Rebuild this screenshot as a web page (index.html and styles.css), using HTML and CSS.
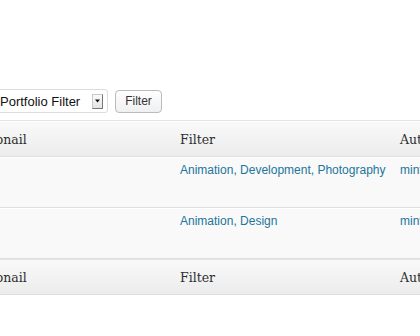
FILE: index.html
```html
<!DOCTYPE html>
<html>
<head>
<meta charset="utf-8">
<link rel="stylesheet" href="styles.css">
</head>
<body>
<div class="page">
  <div class="actions">
    <div class="select">
      <span class="select-text">Portfolio Filter</span>
      <span class="select-arrow"><svg width="5" height="4" viewBox="0 0 5 4"><path d="M0 0.5h5L2.5 3.5z" fill="#111"/></svg></span>
    </div>
    <button class="btn">Filter</button>
  </div>
  <div class="table">
    <div class="row head">
      <div class="cell c1">Thumbnail</div>
      <div class="cell c2">Filter</div>
      <div class="cell c3">Author</div>
    </div>
    <div class="row body">
      <div class="cell c1"></div>
      <div class="cell c2"><a>Animation</a>, <a>Development</a>, <a>Photography</a></div>
      <div class="cell c3"><a>mintthemes</a></div>
    </div>
    <div class="row body">
      <div class="cell c1"></div>
      <div class="cell c2"><a>Animation</a>, <a>Design</a></div>
      <div class="cell c3"><a>mintthemes</a></div>
    </div>
    <div class="row head foot">
      <div class="cell c1">Thumbnail</div>
      <div class="cell c2">Filter</div>
      <div class="cell c3">Author</div>
    </div>
  </div>
</div>
</body>
</html>
```
FILE: styles.css
```css
html, body {
  margin: 0;
  padding: 0;
  background: #fff;
  overflow: hidden;
}
.page {
  width: 420px;
  height: 336px;
  overflow: hidden;
  padding-top: 89px;
  box-sizing: border-box;
}
.actions {
  display: flex;
  align-items: center;
  gap: 7px;
  margin-left: -60px;
  height: 24px;
}
.select {
  width: 168px;
  height: 24px;
  box-sizing: border-box;
  border: 1px solid #dcdcdc;
  border-radius: 3px;
  background: #fff;
  display: flex;
  align-items: center;
  justify-content: flex-end;
  padding-right: 4px;
  font-family: "Liberation Sans", Arial, sans-serif;
  font-size: 13px;
  color: #111;
}
.select-text {
  flex: 1;
  padding-left: 59px;
}
.select-arrow {
  width: 11px;
  height: 15px;
  box-sizing: border-box;
  border: 1px solid #c8c8c8;
  border-right-color: #777;
  border-bottom-color: #777;
  background: linear-gradient(#fafafa, #e4e4e4);
  display: flex;
  align-items: center;
  justify-content: center;
}
.btn {
  margin: 0;
  width: 47px;
  height: 23px;
  box-sizing: border-box;
  border: 1px solid #bbb;
  border-radius: 4px;
  background: linear-gradient(#fefefe, #f0f0f0);
  font-family: "Liberation Sans", Arial, sans-serif;
  font-size: 12px;
  color: #333;
  padding: 0;
}
.table {
  margin-top: 7px;
  margin-left: -51px;
  width: 520px;
  border-top: 1px solid #e3e3e3;
  background: #f9f9f9;
}
.row {
  display: grid;
  grid-template-columns: 221px 220px 79px;
}
.head {
  height: 36px;
  box-sizing: border-box;
  background: linear-gradient(#f9f9f9, #ececec);
  border-top: 1px solid #fff;
  border-bottom: 1px solid #dfdfdf;
  font-family: "DejaVu Serif", Georgia, serif;
  font-size: 12.5px;
  color: #2e2e2e;
  align-items: center;
}
.head .cell {
  padding-left: 10px;
  padding-top: 1px;
}
.foot {
  border-top: 1px solid #e6e6e6;
}
.body {
  height: 51px;
  box-sizing: border-box;
  border-top: 1px solid #fff;
  border-bottom: 1px solid #dfdfdf;
  font-family: "Liberation Sans", Arial, sans-serif;
  font-size: 12px;
  color: #21759b;
}
.body .cell {
  padding: 5px 0 0 10px;
  line-height: 14px;
}
.cell {
  white-space: nowrap;
}
a {
  color: #21759b;
}
```
